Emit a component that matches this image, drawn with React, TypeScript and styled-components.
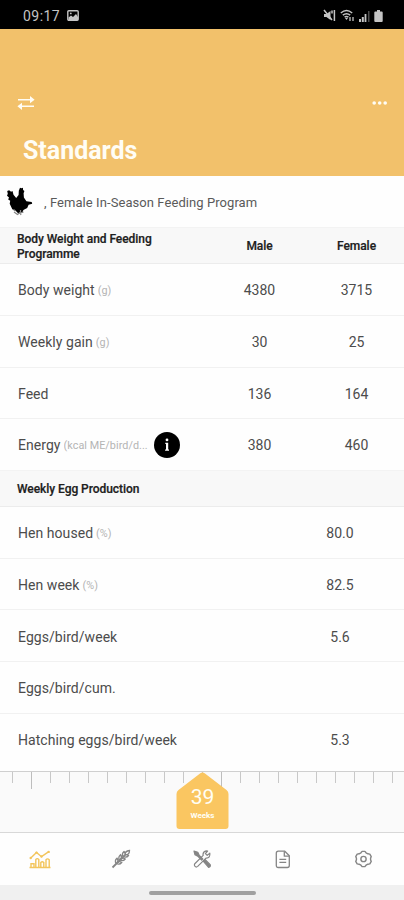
import React from 'react';
import styled, { createGlobalStyle } from 'styled-components';

const Global = createGlobalStyle`
  *, *::before, *::after { box-sizing: border-box; }
  body { margin: 0; background: #fefefe; font-family: Roboto, "Liberation Sans", sans-serif; }
  svg { display: block; flex: none; }
`;

const Screen = styled.main`
  width: 404px;
  height: 900px;
  display: flex;
  flex-direction: column;
  overflow: hidden;
  background: #fefefe;
  color: #4c4c4c;
`;

const StatusBar = styled.div`
  flex: none;
  height: 29px;
  padding: 2px 21px 0 23px;
  display: flex;
  align-items: center;
  justify-content: space-between;
  background: #000;
  color: #c4c4c4;
`;

const StatusGroup = styled.div<{ $gap: number }>`
  display: flex;
  align-items: center;
  gap: ${(p) => p.$gap}px;
`;

const Clock = styled.span`
  font-size: 14px;
  line-height: 18px;
  letter-spacing: 0.45px;
`;

const Header = styled.header`
  flex: none;
  height: 147px;
  padding: 66px 16px 0 17px;
  background: #f2c16b;
  color: #fffdf5;
`;

const HeaderActions = styled.div`
  display: flex;
  align-items: center;
  justify-content: space-between;
  height: 16px;
`;

const Title = styled.h1`
  margin: 24px 0 0 6px;
  font-size: 25px;
  line-height: 32px;
  font-weight: 700;
  letter-spacing: -0.02px;
`;

const Program = styled.div`
  flex: none;
  height: 51px;
  display: flex;
  align-items: center;
  gap: 11px;
  padding: 1px 6px 0;
  font-size: 13px;
  letter-spacing: 0.07px;
  color: #5a5a5a;
`;

const Columns = styled.div<{ $height: number }>`
  flex: none;
  height: ${(p) => p.$height}px;
  display: grid;
  grid-template-columns: 194px 97px 97px;
  align-items: center;
  padding: 2px 0 0 17px;
`;

const SectionHead = styled(Columns)`
  background: #f8f8f8;
  border-top: 1px solid #f3f3f3;
  border-bottom: 1px solid #ececec;
  color: #202020;
  font-size: 12px;
  line-height: 15px;
  font-weight: 500;
  letter-spacing: -0.05px;
  -webkit-text-stroke: 0.2px #202020;
`;

const SectionTitle = styled.span`
  max-width: 150px;
  white-space: normal;
`;

const Row = styled(Columns)<{ $last?: boolean }>`
  border-bottom: 1px solid ${(p) => (p.$last ? 'transparent' : '#f1f1f1')};
  font-size: 14px;
  line-height: 20px;
`;

const Label = styled.div`
  display: flex;
  align-items: center;
  padding-left: 1px;
  letter-spacing: 0.05px;
  white-space: nowrap;
`;

const Unit = styled.span<{ $width?: number }>`
  margin-left: 3px;
  padding-top: 2px;
  width: ${(p) => (p.$width ? `${p.$width}px` : 'auto')};
  overflow: hidden;
  text-overflow: ellipsis;
  font-size: 10.8px;
  color: #b4b4b4;
`;

const Value = styled.span<{ $right?: boolean }>`
  text-align: center;
  letter-spacing: 0;
  grid-column: ${(p) => (p.$right ? 3 : 'auto')};
  padding-right: ${(p) => (p.$right ? 33 : 0)}px;
`;

const Heading = styled.span`
  text-align: center;
`;

const InfoButton = styled.button`
  flex: none;
  width: 26px;
  height: 26px;
  margin-left: 5px;
  padding: 0;
  border: 0;
  border-radius: 50%;
  background: #000;
  color: #fff;
  display: grid;
  place-items: center;
`;

const Ruler = styled.div`
  flex: none;
  position: relative;
  margin-top: 6px;
  height: 62px;
  border-top: 1px solid #cfcfcf;
  border-bottom: 1px solid #d8d8d8;
  background: #fafafa;
`;

const Ticks = styled.div`
  display: grid;
  grid-template-columns: repeat(21, 19px);
  padding-left: 12px;
`;

const Tick = styled.i<{ $long: boolean }>`
  width: 1px;
  height: ${(p) => (p.$long ? 17 : 11)}px;
  background: ${(p) => (p.$long ? '#bdbdbd' : '#c8c8c8')};
`;

const WeekMarker = styled.div`
  position: absolute;
  left: 176px;
  top: 0;
  width: 53px;
  height: 58px;
  padding-top: 12px;
  text-align: center;
  color: #fffef5;
`;

const MarkerShape = styled.svg`
  position: absolute;
  inset: 0;
`;

const WeekNumber = styled.div`
  position: relative;
  font-size: 21px;
  line-height: 26px;
  font-weight: 400;
`;

const WeekCaption = styled.div`
  position: relative;
  margin-top: 1px;
  font-size: 8px;
  line-height: 10px;
  font-weight: 700;
`;

const Tabs = styled.nav`
  flex: none;
  height: 52px;
  display: grid;
  grid-template-columns: repeat(5, 80.8px);
  place-items: center;
  color: #858585;
`;

const Tab = styled.a<{ $active?: boolean }>`
  display: flex;
  color: ${(p) => (p.$active ? '#f3c55c' : 'inherit')};
`;

const HomeArea = styled.div`
  flex: 1;
  display: flex;
  justify-content: center;
  padding-top: 6px;
  background: #f0f0f0;
`;

const HomeBar = styled.div`
  width: 107px;
  height: 4px;
  border-radius: 2px;
  background: #a0a0a0;
`;

type RowData = { name: string; unit?: string; male?: string; female?: string; info?: boolean };

const bodyRows: RowData[] = [
  { name: 'Body weight', unit: '(g)', male: '4380', female: '3715' },
  { name: 'Weekly gain', unit: '(g)', male: '30', female: '25' },
  { name: 'Feed', male: '136', female: '164' },
  { name: 'Energy', unit: '(kcal ME/bird/d...', male: '380', female: '460', info: true },
];

const eggRows: RowData[] = [
  { name: 'Hen housed', unit: '(%)', female: '80.0' },
  { name: 'Hen week', unit: '(%)', female: '82.5' },
  { name: 'Eggs/bird/week', female: '5.6' },
  { name: 'Eggs/bird/cum.' },
  { name: 'Hatching eggs/bird/week', female: '5.3' },
];

const Picture = () => (
  <svg width="12" height="11" viewBox="0 0 12 11">
    <rect x=".8" y=".8" width="10.4" height="9.4" rx="1" fill="none" stroke="currentColor" strokeWidth="1.4" />
    <path d="M1.5 9V7.5L4 5.5 6 7l3-3 2 3v3H1.5z" fill="currentColor" />
    <circle cx="3.8" cy="3.4" r=".9" fill="currentColor" />
  </svg>
);

const Muted = () => (
  <svg width="13" height="13" viewBox="0 0 13 13">
    <path d="M1 5h2.4L7.5 2v9L3.4 8H1z" fill="currentColor" />
    <path d="M1 1l8 10M9 1.5v3M11.4 1v11" stroke="currentColor" strokeWidth="1.5" />
  </svg>
);

const Wifi = () => (
  <svg width="15" height="13" viewBox="0 0 15 13" fill="none" stroke="currentColor">
    <path d="M.8 4Q6.5-.9 12.2 4M2.8 6.2q3.7-3 7.4 0M4.6 8.2q1.9-1.5 3.8 0" strokeWidth="1.5" />
    <path d="M5 9h3l-1.5 2z" fill="currentColor" stroke="none" />
    <path d="M10 12V8M13 8v4" strokeWidth="1.3" />
  </svg>
);

const Signal = () => (
  <svg width="11" height="12" viewBox="0 0 11 12" fill="currentColor">
    <rect x="0" y="9" width="2" height="3" />
    <rect x="2.8" y="7" width="2" height="5" />
    <rect x="5.6" y="4" width="1.8" height="8" />
    <rect x="9" y="1" width="1.5" height="11" opacity=".4" />
  </svg>
);

const Battery = () => (
  <svg width="9" height="12" viewBox="0 0 9 12" fill="currentColor">
    <path d="M3 0h3v1.5h1.7q1 0 1 1V11q0 1-1 1H1.3q-1 0-1-1V2.5q0-1 1-1H3z" />
  </svg>
);

const Swap = () => (
  <svg width="18" height="16" viewBox="0 0 18 16">
    <path d="M1 4.7h13M4 11.3h13" stroke="currentColor" strokeWidth="1.6" />
    <path d="M13 1l4.6 3.7L13 8.2zM5 7.8L.4 11.3 5 15z" fill="currentColor" />
  </svg>
);

const More = () => (
  <svg width="16" height="6" viewBox="0 0 16 6" fill="currentColor">
    <circle cx="2.2" cy="3" r="1.8" />
    <circle cx="7.7" cy="3" r="1.8" />
    <circle cx="13.2" cy="3" r="1.8" />
  </svg>
);

const Hen = () => (
  <svg width="27" height="30" viewBox="0 0 27 30">
    <path d="M1.2 4l1.9-.8 2 1.6 1.4-.8 1 3.8 2.7 3.2 2.4-3 .2-4.200 1.200-3 1.400.500 1.500-.6.2 2.400 1.300 1-.8 2.200.3 4.300 2.500 3.700 5.300.7.500 1.700-3.600 1-1.400 3.200-3.800 2-1 2.600-4.100.9-2.400-2.500-3.600-1.600-2.600-5.500.5-3-2-1.400.8-2-2-1.700.8-1.900z" fill="#000" />
    <path d="M7.500 22.500l2 1.500M8 25l3.500 2.500 2.500-2 1 2.500M14.5 23v3l3-1" fill="none" stroke="#858585" strokeWidth="1.2" />
  </svg>
);

const InfoGlyph = () => (
  <svg width="10" height="16" viewBox="0 0 10 16" fill="currentColor">
    <circle cx="5" cy="2.9" r="1.4" />
    <path d="M3.300 5.800h2.900v6.800h.8v1.200H3.100v-1.200h.9V7H3.300z" />
  </svg>
);

const ChartIcon = () => (
  <svg width="22" height="19" viewBox="0 0 22 19" fill="none" stroke="currentColor" strokeWidth="1.4">
    <path d="M1.5 8.2L7.5 2.5l5 4.2 7.3-5M.5 17.500h21M2 17v-3.200h3V17M6.800 17V9.500q1.500-1.800 3 0V17M11.800 17v-4.500q1.500-1.300 3 0V17M17 17V9.800q1.500-1.800 3.200 0V17" />
    <g fill="currentColor" stroke="none">
      <circle cx="1.700" cy="8" r="1.200" /><circle cx="7.500" cy="2.600" r="1.200" />
      <circle cx="12.500" cy="6.500" r="1.200" /><circle cx="19.700" cy="1.900" r="1.200" />
    </g>
  </svg>
);

const WheatIcon = () => (
  <svg width="20" height="20" viewBox="0 0 20 20" fill="none" stroke="currentColor" strokeWidth="1.3">
    <path d="M1.5 18.5L14 6" strokeWidth="1.8" />
    <path d="M5 14.500Q3.400 11.500 6 9.200q2 2.300 0 4.700M8.500 11Q6.800 8 9.500 5.700q2 2.300 0 4.700M12 7.500Q10.500 4.500 13 2.500q2.300 2.300.5 4.700M5.500 14.500q3 1.700 5.200-1-2.100-1.700-4.200 0M9 11q3 1.700 5.200-1-2.100-1.700-4.200 0M12.500 7.500q3 1.700 5-1-2-1.700-4 0M14 6q-.2-4 4.500-4.500Q18.500 6 14 6z" />
  </svg>
);

const ToolsIcon = () => (
  <svg width="20" height="20" viewBox="0 0 20 20" fill="none" stroke="currentColor" strokeWidth="1.2" strokeLinejoin="round">
    <path d="M2 2l3.800 1.300 1.500 3.200 3.500 3.400-1.200 1.200L6.200 7.500 3 5.800z" fill="currentColor" />
    <path d="M11.200 12.200l1.800-1.800 5.200 5.300q.7 2.300-1.600 2.600z" fill="currentColor" />
    <path d="M17.800 4.200l-2.600 2.200-1.800-1.800L15.600 2q-3.900-.5-4.600 3.100l.2 1.300-8.400 8.300q-1 1.500.2 2.700t2.700 0L14 9.100q4.500.2 3.800-4.900z" />
  </svg>
);

const DocumentIcon = () => (
  <svg width="16" height="19" viewBox="0 0 16 19" fill="none" stroke="currentColor" strokeWidth="1.300" strokeLinejoin="round">
    <path d="M3.300 1.200h6.500l4.500 4.500v9.800q0 2-2 2h-9q-2 0-2-2V3.200q0-2 2-2z" />
    <path d="M9.300 1.500v4.700h4.900M4.400 9.400h6.800M4.400 12.400h6.800" />
  </svg>
);

const SettingsIcon = () => (
  <svg width="17" height="18" viewBox="0 0 18 19" fill="none" stroke="currentColor" strokeWidth="1.500" strokeLinejoin="round">
    <path d="M7.500 1.400h3l1.200 1.500 2 1.100 2 .3 1.500 2.600-.7 1.700v1.800l.7 1.700-1.500 2.600-2 .3-2 1.100-1.200 1.500h-3l-1.200-1.500-2-1.100-2-.3L.8 12.100l.7-1.700V8.600L.8 6.900l1.500-2.600 2-.3 2-1.100z" />
    <circle cx="9" cy="9.500" r="2.800" />
  </svg>
);

const DataRow = ({ data, height, right, last }: { data: RowData; height: number; right?: boolean; last?: boolean }) => (
  <Row $height={height} $last={last}>
    <Label>
      {data.name}
      {data.unit && <Unit $width={data.info ? 85 : undefined}>{data.unit}</Unit>}
      {data.info && <InfoButton aria-label="Energy information"><InfoGlyph /></InfoButton>}
    </Label>
    {!right && <Value>{data.male}</Value>}
    {data.female && <Value $right={right}>{data.female}</Value>}
  </Row>
);

export default function App() {
  return (
    <Screen>
      <Global />
      <StatusBar>
        <StatusGroup $gap={7}><Clock>09:17</Clock><Picture /></StatusGroup>
        <StatusGroup $gap={4}><Muted /><Wifi /><Signal /><Battery /></StatusGroup>
      </StatusBar>
      <Header>
        <HeaderActions><Swap /><More /></HeaderActions>
        <Title>Standards</Title>
      </Header>
      <Program><Hen /><span>, Female In-Season Feeding Program</span></Program>
      <SectionHead $height={37}>
        <SectionTitle>Body Weight and Feeding Programme</SectionTitle>
        <Heading>Male</Heading>
        <Heading>Female</Heading>
      </SectionHead>
      {bodyRows.map((r, i) => <DataRow key={r.name} data={r} height={i === 3 ? 51 : 51.8} last={i === 3} />)}
      <SectionHead $height={36.6}><SectionTitle>Weekly Egg Production</SectionTitle></SectionHead>
      {eggRows.map((r, i) => <DataRow key={r.name} data={r} height={51.7} right last={i === 4} />)}
      <Ruler>
        <Ticks>{Array.from({ length: 21 }, (_, i) => <Tick key={i} $long={i % 10 === 1} />)}</Ticks>
        <WeekMarker>
          <MarkerShape width="53" height="58" viewBox="0 0 53 58">
            <path d="M24 1.500q2.500-2 5 0L50.500 18q2 1.500 2 4v32q0 3-3 3h-46q-3 0-3-3V22q0-2.500 2-4z" fill="#fac661" />
          </MarkerShape>
          <WeekNumber>39</WeekNumber>
          <WeekCaption>Weeks</WeekCaption>
        </WeekMarker>
      </Ruler>
      <Tabs>
        <Tab $active><ChartIcon /></Tab>
        <Tab><WheatIcon /></Tab>
        <Tab><ToolsIcon /></Tab>
        <Tab><DocumentIcon /></Tab>
        <Tab><SettingsIcon /></Tab>
      </Tabs>
      <HomeArea><HomeBar /></HomeArea>
    </Screen>
  );
}
